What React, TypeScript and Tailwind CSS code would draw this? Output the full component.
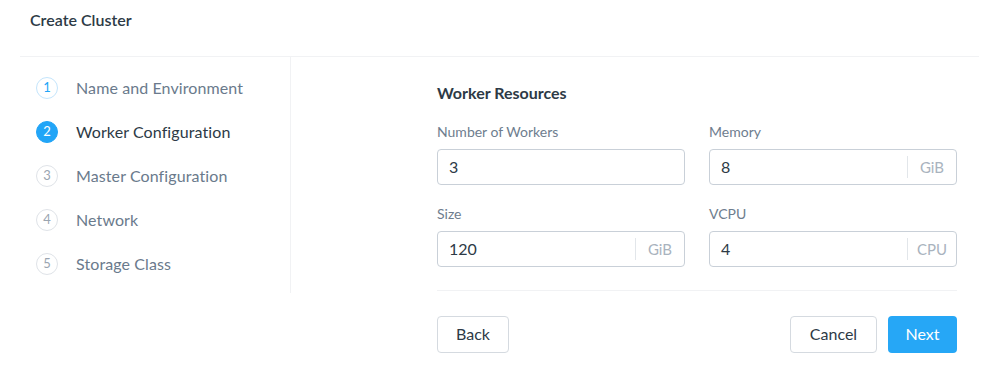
import React from "react";

type Step = { n: number; label: string; state: "done" | "active" | "todo" };

const steps: Step[] = [
  { n: 1, label: "Name and Environment", state: "done" },
  { n: 2, label: "Worker Configuration", state: "active" },
  { n: 3, label: "Master Configuration", state: "todo" },
  { n: 4, label: "Network", state: "todo" },
  { n: 5, label: "Storage Class", state: "todo" },
];

const StepRow = ({ step }: { step: Step }) => {
  const circle =
    step.state === "active"
      ? "bg-[#22a5f7] border-[#22a5f7] text-white"
      : step.state === "done"
        ? "bg-white border-[#c4e5fc] text-[#22a5f7]"
        : "bg-white border-[#dfe3e8] text-[#9aa5b1]";
  const text = step.state === "active" ? "text-[#2d3a46]" : "text-[#6a7a8c]";
  return (
    <div className="flex h-[44px] items-center">
      <div
        className={`ml-[16px] flex h-[22px] w-[22px] items-center justify-center rounded-full border text-[13px] ${circle}`}
      >
        {step.n}
      </div>
      <span className={`ml-[18px] text-[16px] tracking-[0.1px] ${text}`}>
        {step.label}
      </span>
    </div>
  );
};

const Field = ({
  label,
  value,
  unit,
}: {
  label: string;
  value: string;
  unit?: string;
}) => (
  <div className="flex flex-col">
    <label className="text-[14px] leading-[18px] text-[#6e7d8e]">{label}</label>
    <div className="mt-[8px] flex h-[36px] items-center rounded-[4px] border border-[#c9d0d8] bg-white">
      <span className="flex-1 pl-[11px] text-[16px] text-[#2d3a46]">{value}</span>
      {unit && (
        <div className="flex items-center">
          <div className="h-[22px] w-px bg-[#e2e6ea]" />
          <span className="w-[48px] text-center text-[15px] text-[#a9b3be]">
            {unit}
          </span>
        </div>
      )}
    </div>
  </div>
);

export default function App() {
  return (
    <div
      className="h-[378px] w-[985px] bg-white"
      style={{ fontFamily: "Lato, 'Open Sans', sans-serif" }}
    >
      <div className="ml-[20px] mr-[6px] h-[57px] border-b border-[#f1f2f4] pl-[10px] pt-[11px]">
        <h1 className="text-[16px] leading-[18px] font-semibold text-[#2d3a46]">
          Create Cluster
        </h1>
      </div>

      <div className="ml-[20px] flex items-start">
        <aside className="h-[236px] w-[271px] border-r border-[#f1f2f4] pt-[9px]">
          {steps.map((s) => (
            <StepRow key={s.n} step={s} />
          ))}
        </aside>

        <main className="ml-[146px] w-[520px] pt-[26px]">
          <h2 className="text-[16px] leading-[20px] font-bold text-[#2d3a46]">
            Worker Resources
          </h2>
          <div className="mt-[20px] grid grid-cols-2 gap-x-[24px] gap-y-[20px]">
            <Field label="Number of Workers" value="3" />
            <Field label="Memory" value="8" unit="GiB" />
            <Field label="Size" value="120" unit="GiB" />
            <Field label="VCPU" value="4" unit="CPU" />
          </div>
          <div className="mt-[23px] h-px bg-[#f1f2f4]" />
          <div className="mt-[25px] flex items-center">
            <button className="h-[37px] w-[72px] rounded-[4px] border border-[#d5dae0] bg-white pb-[2px] text-[16px] text-[#2d3a46]">
              Back
            </button>
            <div className="flex-1" />
            <button className="h-[37px] w-[87px] rounded-[4px] border border-[#d5dae0] bg-white pb-[2px] text-[16px] text-[#2d3a46]">
              Cancel
            </button>
            <button className="ml-[11px] h-[37px] w-[69px] rounded-[4px] bg-[#26a7f6] pb-[2px] text-[16px] text-white">
              Next
            </button>
          </div>
        </main>
      </div>
    </div>
  );
}
